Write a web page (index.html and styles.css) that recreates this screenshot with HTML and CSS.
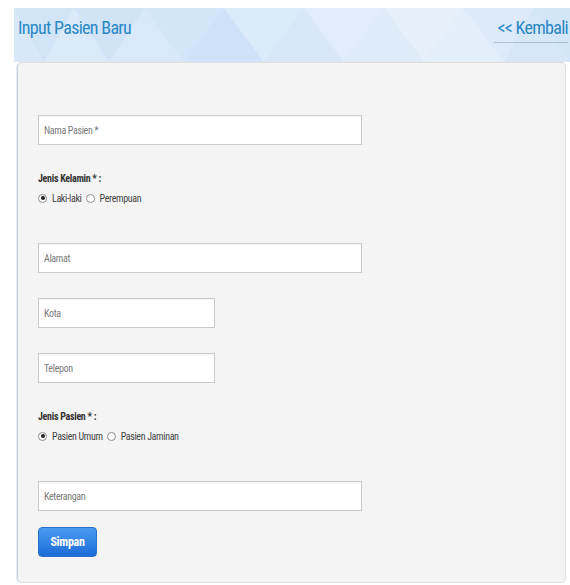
FILE: index.html
```html
<!DOCTYPE html>
<html lang="id">
<head>
<meta charset="utf-8">
<title>Input Pasien Baru</title>
<link rel="stylesheet" href="styles.css">
</head>
<body>
<div class="page">
  <header class="page-head">
    <h1 class="page-title">Input Pasien Baru</h1>
    <a class="back-link" href="#">&lt;&lt; Kembali</a>
  </header>

  <form class="panel">
    <div class="field field-first">
      <input class="text-input wide" type="text" placeholder="Nama Pasien *">
    </div>

    <div class="choice-group">
      <div class="choice-label">Jenis Kelamin * :</div>
      <div class="choice-row">
        <label class="choice"><input type="radio" name="jk" checked><span>Laki-laki</span></label>
        <label class="choice"><input type="radio" name="jk"><span>Perempuan</span></label>
      </div>
    </div>

    <div class="field field-after-choice">
      <input class="text-input wide" type="text" placeholder="Alamat">
    </div>
    <div class="field">
      <input class="text-input short" type="text" placeholder="Kota">
    </div>
    <div class="field">
      <input class="text-input short" type="text" placeholder="Telepon">
    </div>

    <div class="choice-group">
      <div class="choice-label">Jenis Pasien * :</div>
      <div class="choice-row">
        <label class="choice"><input type="radio" name="jp" checked><span>Pasien Umum</span></label>
        <label class="choice"><input type="radio" name="jp"><span>Pasien Jaminan</span></label>
      </div>
    </div>

    <div class="field field-after-choice">
      <input class="text-input wide" type="text" placeholder="Keterangan">
    </div>

    <div class="actions">
      <button class="btn-save" type="button">Simpan</button>
    </div>
  </form>
</div>
</body>
</html>
```
FILE: styles.css
```css
* { box-sizing: border-box; }

html, body {
  margin: 0;
  background: #ffffff;
}

body {
  font-family: "Roboto Condensed", "Liberation Sans", Arial, sans-serif;
  color: #333;
}

.page {
  padding: 8px 0 0 14px;
}

/* title bar with the pale blue triangle pattern */
.page-head {
  height: 54px;
  display: flex;
  justify-content: space-between;
  align-items: flex-start;
  padding: 9px 2px 0 4px;
  background-color: #d9e9f9;
  background-image: url("data:image/svg+xml;utf8,<svg xmlns='http://www.w3.org/2000/svg' width='556' height='54' viewBox='0 0 556 54'><rect width='556' height='54' fill='%23d8e8f9'/><polygon points='0,0 60,0 30,54' fill='%23d2e4f7'/><polygon points='30,54 60,0 95,54' fill='%23dbeaf9'/><polygon points='60,0 130,0 95,54' fill='%23d0e3f7'/><polygon points='95,54 130,0 170,54' fill='%23d9e9f9'/><polygon points='130,0 210,0 170,54' fill='%23d3e5f8'/><polygon points='170,54 210,0 250,54' fill='%23cfe2f7'/><polygon points='210,0 290,0 250,54' fill='%23dcebfa'/><polygon points='250,54 290,0 330,54' fill='%23d8e8f9'/><polygon points='290,0 370,0 330,54' fill='%23e1edfb'/><polygon points='330,54 370,0 410,54' fill='%23deecfa'/><polygon points='370,0 450,0 410,54' fill='%23e6f0fb'/><polygon points='410,54 450,0 490,54' fill='%23e3eefb'/><polygon points='450,0 520,0 490,54' fill='%23dceafa'/><polygon points='490,54 520,0 556,54' fill='%23d6e7f8'/><polygon points='520,0 556,0 556,54' fill='%23d3e5f8'/></svg>");
  background-size: 100% 100%;
}

.page-title {
  margin: 0;
  font-size: 18px;
  font-weight: 400;
  line-height: 22px;
  letter-spacing: -0.7px;
  color: #2a88c4;
}

.back-link {
  display: block;
  font-size: 18px;
  line-height: 22px;
  letter-spacing: -0.7px;
  color: #2a88c4;
  text-decoration: none;
  padding: 0 0 3px 3px;
  border-bottom: 1px solid #adc2d5;
}

/* form card */
.panel {
  width: 549px;
  height: 521px;
  margin: 0 0 0 3px;
  padding: 52px 0 0 20px;
  background-color: #f4f4f4;
  border: 1px solid #dedede;
  border-left-color: #c9d3de;
  border-radius: 5px;
  box-shadow: -1px 0 0 rgba(150,170,200,0.25);
}

.field + .field { margin-top: 25px; }
.field-after-choice { margin-top: 37px; }

.text-input {
  display: block;
  height: 30px;
  padding: 0 5px;
  border: 1px solid #cacaca;
  border-radius: 0;
  background: #ffffff;
  box-shadow: inset 0 1px 1px rgba(0,0,0,0.04);
  font-family: "Roboto Condensed", "Liberation Sans", Arial, sans-serif;
  font-size: 10px;
  letter-spacing: -0.35px;
  color: #555;
  outline: none;
}
.text-input::placeholder { color: #7a7a7a; }
.text-input.wide { width: 324px; }
.text-input.short { width: 177px; }

/* radio groups */
.choice-group { margin-top: 27px; }

.choice-label {
  font-size: 10px;
  font-weight: 700;
  line-height: 14px;
  letter-spacing: -0.3px;
  color: #333;
}

.choice-row {
  display: flex;
  align-items: center;
  gap: 4px;
  margin-top: 4px;
  height: 16px;
}

.choice {
  display: flex;
  align-items: center;
  gap: 5px;
  font-size: 10px;
  letter-spacing: -0.35px;
  color: #444;
}

.choice input {
  appearance: none;
  -webkit-appearance: none;
  margin: 0;
  width: 9px;
  height: 9px;
  border: 1px solid #8e8e8e;
  border-radius: 50%;
  background: #fff;
  display: grid;
  place-content: center;
}
.choice input:checked::before {
  content: "";
  width: 4px;
  height: 4px;
  border-radius: 50%;
  background: #222;
}

/* submit */
.actions { margin-top: 16px; }

.btn-save {
  width: 59px;
  height: 30px;
  border: 1px solid #2a6fcb;
  border-radius: 4px;
  background: linear-gradient(#4b9bf1, #1c6bd7);
  color: #fff;
  font-family: "Roboto Condensed", "Liberation Sans", Arial, sans-serif;
  font-size: 12px;
  font-weight: 700;
  letter-spacing: -0.3px;
  cursor: pointer;
}
```
